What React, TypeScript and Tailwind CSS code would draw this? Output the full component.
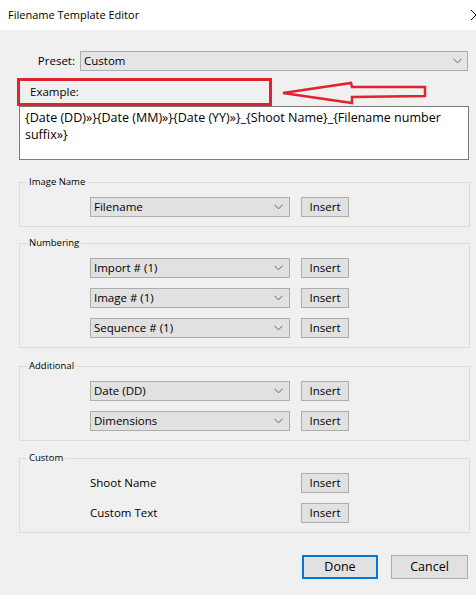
import React from "react";

const font = { fontFamily: '"Open Sans", "Noto Sans", sans-serif' };

function Chevron() {
  return (
    <svg width="9" height="6" viewBox="0 0 9 6" className="shrink-0">
      <path d="M0.5 0.8 L4.5 4.8 L8.5 0.8" fill="none" stroke="#606060" strokeWidth="1" />
    </svg>
  );
}

function Combo({ label }: { label: string }) {
  return (
    <div className="flex h-[20px] w-[200px] items-center justify-between border border-[#adadad] bg-[#e1e1e1] pl-[3px] pr-[6px] text-[11.5px] leading-none text-black">
      <span>{label}</span>
      <Chevron />
    </div>
  );
}

function InsertBtn() {
  return (
    <div className="flex h-[20px] w-[48px] items-center justify-center border border-[#adadad] bg-[#e1e1e1] text-[11.5px] leading-none text-black">
      Insert
    </div>
  );
}

function Group({ title, children, className }: { title: string; children: React.ReactNode; className?: string }) {
  return (
    <fieldset className={"border border-[#dcdcdc] pb-[9px] " + (className ?? "")}>
      <legend className="ml-[7px] px-[2px] text-[9.5px] leading-[12px] text-black">{title}</legend>
      <div className="mt-[9px] flex flex-col gap-[10px] pl-[70px]">{children}</div>
    </fieldset>
  );
}

function Row({ label, combo = true }: { label: string; combo?: boolean }) {
  return (
    <div className="flex items-center gap-[11px]">
      {combo ? (
        <Combo label={label} />
      ) : (
        <div className="flex h-[20px] w-[200px] items-center text-[11.5px] text-black">{label}</div>
      )}
      <InsertBtn />
    </div>
  );
}

export default function App() {
  return (
    <div className="relative h-[600px] w-[476px] overflow-hidden bg-white" style={font}>
      {/* title bar */}
      <div className="flex h-[30px] items-center justify-between bg-white pl-[8px]">
        <span className="text-[11px] text-black">Filename Template Editor</span>
        <svg width="10" height="10" viewBox="0 0 10 10" className="mr-[-5px]">
          <path d="M0 0 L10 10 M10 0 L0 10" stroke="#000" strokeWidth="1" />
        </svg>
      </div>
      {/* body */}
      <div className="flex h-[565px] flex-col bg-[#f0f0f0] pl-[19px] pr-[6px] pt-[21px]">
        {/* preset */}
        <div className="flex items-center">
          <span className="w-[56px] text-right text-[11.5px] text-black">Preset:</span>
          <div className="ml-[5px] mr-[2px] flex h-[20px] flex-1 items-center justify-between border border-[#adadad] bg-[#e5e5e5] pl-[3px] pr-[5px] text-[11.5px] text-black">
            <span>Custom</span>
            <Chevron />
          </div>
        </div>
        {/* example label with red box and arrow */}
        <div className="relative mt-[7px] h-[28px]">
          <div className="-ml-[2px] flex h-[28px] w-[255px] items-center border-[3px] border-[#e0232e] pl-[10px] text-[11.5px] text-black">
            Example:
          </div>
          <svg className="absolute left-[262px] top-[3px]" width="150" height="24" viewBox="0 0 150 24">
            <path
              d="M2 12 L70 2 L71 6 L144 6 L144 15 L71 16 L71 22 Z"
              fill="none"
              stroke="#e0232e"
              strokeWidth="2.5"
              strokeLinejoin="miter"
            />
          </svg>
        </div>
        {/* text area */}
        <div className="mr-[1px] h-[54px] border border-[#7a7a7a] bg-white px-[5px] pt-[2px] text-[12.5px] leading-[17px] text-black">
          <div className="whitespace-nowrap">{"{Date (DD)»}{Date (MM)»}{Date (YY)»}_{Shoot Name}_{Filename number"}</div>
          <div className="whitespace-nowrap">{"suffix»}"}</div>
        </div>

        <Group title="Image Name" className="mt-[16px]">
          <Row label="Filename" />
        </Group>

        <Group title="Numbering" className="mt-[10px]">
          <Row label="Import # (1)" />
          <Row label="Image # (1)" />
          <Row label="Sequence # (1)" />
        </Group>

        <Group title="Additional" className="mt-[12px]">
          <Row label="Date (DD)" />
          <Row label="Dimensions" />
        </Group>

        <Group title="Custom" className="mt-[11px]">
          <Row label="Shoot Name" combo={false} />
          <Row label="Custom Text" combo={false} />
        </Group>

        <div className="mt-[22px] flex justify-end gap-[13px] pr-[2px]">
          <div className="flex h-[24px] w-[76px] items-center justify-center border-2 border-[#0078d7] bg-[#e1e1e1] text-[12.5px] text-black">
            Done
          </div>
          <div className="flex h-[24px] w-[77px] items-center justify-center border border-[#adadad] bg-[#e1e1e1] text-[12.5px] text-black">
            Cancel
          </div>
        </div>
      </div>
    </div>
  );
}
